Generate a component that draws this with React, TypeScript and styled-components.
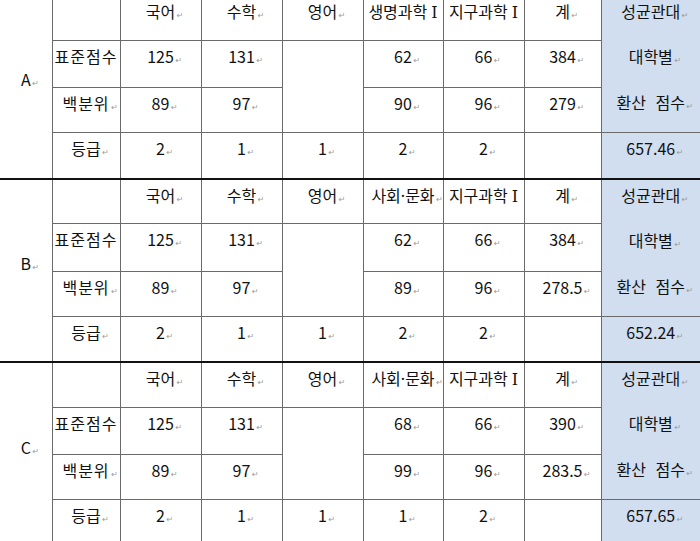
import React from 'react';
import styled, { createGlobalStyle } from 'styled-components';

const GlobalStyle = createGlobalStyle`
  html, body {
    margin: 0;
    padding: 0;
    background: #fff;
    overflow: hidden;
  }
  body {
    font-family: "Noto Sans CJK KR", "Noto Sans", sans-serif;
    color: #111;
  }
`;

interface IBlock {
  label: string;
  subjects: string[];
  std: string[];
  pct: string[];
  grade: string[];
  total: string;
}

const blocks: IBlock[] = [
  {
    label: 'A',
    subjects: ['생명과학', '지구과학'],
    std: ['125', '131', '62', '66', '384'],
    pct: ['89', '97', '90', '96', '279'],
    grade: ['2', '1', '1', '2', '2'],
    total: '657.46',
  },
  {
    label: 'B',
    subjects: ['사회·문화', '지구과학'],
    std: ['125', '131', '62', '66', '384'],
    pct: ['89', '97', '89', '96', '278.5'],
    grade: ['2', '1', '1', '2', '2'],
    total: '652.24',
  },
  {
    label: 'C',
    subjects: ['사회·문화', '지구과학'],
    std: ['125', '131', '68', '66', '390'],
    pct: ['89', '97', '99', '96', '283.5'],
    grade: ['2', '1', '1', '1', '2'],
    total: '657.65',
  },
];

const colWidths = [52, 68, 81, 81, 81, 80, 81, 77, 99];

// Word 문단 기호
const Para = () => <Mark>{'\u2009↵'}</Mark>;

const Subject = ({ name }: { name: string }) => {
  if (name.includes('·')) {
    const [a, b] = name.split('·');
    return (
      <>
        {a}
        <Dot>·</Dot>
        {b}
        <Para />
      </>
    );
  }
  return (
    <>
      {name}
      <Roman>Ⅰ</Roman>
    </>
  );
};

const ScoreBlock = ({ block, last }: { block: IBlock; last: boolean }) => {
  const { label, subjects, std, pct, grade, total } = block;
  return (
    <tbody>
      <Row $h={45}>
        <LabelCell rowSpan={4} $thick={!last}>
          {label}
          <Para />
        </LabelCell>
        <Cell />
        <Cell>
          국어
          <Para />
        </Cell>
        <Cell>
          수학
          <Para />
        </Cell>
        <Cell>
          영어
          <Para />
        </Cell>
        <Cell>
          <Subject name={subjects[0]} />
        </Cell>
        <Cell>
          <Subject name={subjects[1]} />
        </Cell>
        <Cell>
          계
          <Para />
        </Cell>
        <BlueCell rowSpan={3}>
          <BlueLines>
            <BlueLine>
              성균관대
              <Para />
            </BlueLine>
            <BlueLine>
              대학별
              <Para />
            </BlueLine>
            <BlueLine>
              환산 점수
              <Para />
            </BlueLine>
          </BlueLines>
        </BlueCell>
      </Row>
      <Row $h={46}>
        <RowName $spacing={1}>표준점수</RowName>
        <Cell>
          {std[0]}
          <Para />
        </Cell>
        <Cell>
          {std[1]}
          <Para />
        </Cell>
        <Cell rowSpan={2} />
        {std.slice(2).map((v, i) => (
          <Cell key={i}>
            {v}
            <Para />
          </Cell>
        ))}
      </Row>
      <Row $h={45}>
        <RowName $spacing={1}>
          백분위
          <Para />
        </RowName>
        {pct.map((v, i) => (
          <Cell key={i}>
            {v}
            <Para />
          </Cell>
        ))}
      </Row>
      <Row $h={46}>
        <RowName $thick={!last}>
          등급
          <Para />
        </RowName>
        {grade.map((v, i) => (
          <Cell key={i} $thick={!last}>
            {v}
            <Para />
          </Cell>
        ))}
        <Cell $thick={!last} />
        <BlueCell $thick={!last}>
          <BlueLine>
            {total}
            <Para />
          </BlueLine>
        </BlueCell>
      </Row>
    </tbody>
  );
};

export default function App() {
  return (
    <>
      <GlobalStyle />
      <Page>
        <Table>
          <colgroup>
            {colWidths.map((w, i) => (
              <col key={i} style={{ width: w }} />
            ))}
          </colgroup>
          {blocks.map((b, i) => (
            <ScoreBlock key={b.label} block={b} last={i === blocks.length - 1} />
          ))}
        </Table>
      </Page>
    </>
  );
}

const Page = styled.div`
  width: 700px;
  height: 541px;
  overflow: hidden;
`;

const Table = styled.table`
  width: 700px;
  margin-top: -5px;
  table-layout: fixed;
  border-collapse: collapse;
  font-size: 16px;
  line-height: 20px;
`;

const Row = styled.tr<{ $h: number }>`
  height: ${(p) => p.$h}px;
`;

const Cell = styled.td<{ $thick?: boolean }>`
  padding: 5px 0 0;
  border: 1px solid #6a6a6a;
  border-bottom: ${(p) => (p.$thick ? '2px solid #111' : '1px solid #6a6a6a')};
  vertical-align: top;
  text-align: center;
  white-space: nowrap;
  overflow: visible;
`;

const RowName = styled(Cell)<{ $spacing?: number }>`
  letter-spacing: ${(p) => p.$spacing ?? 0}px;
`;

const LabelCell = styled(Cell)`
  border-left: none;
  padding: 0 0 10px;
  vertical-align: middle;
`;

const BlueCell = styled(Cell)`
  padding: 0;
  background: #d0deef;
  border-right: none;
`;

const BlueLines = styled.div`
  display: grid;
  grid-template-rows: 45px 46px 45px;
`;

const BlueLine = styled.div`
  padding-top: 5px;
  word-spacing: 6px;
`;

const Mark = styled.span`
  display: inline-block;
  width: 0;
  white-space: nowrap;
  font-family: "DejaVu Sans", sans-serif;
  font-size: 8px;
  letter-spacing: 0;
  color: #9a9a9a;
  word-spacing: 0;
`;

const Dot = styled.span`
  font-family: "Noto Sans", sans-serif;
`;

const Roman = styled.span`
  font-family: "DejaVu Serif", "Liberation Serif", serif;
  padding-left: 4px;
`;
